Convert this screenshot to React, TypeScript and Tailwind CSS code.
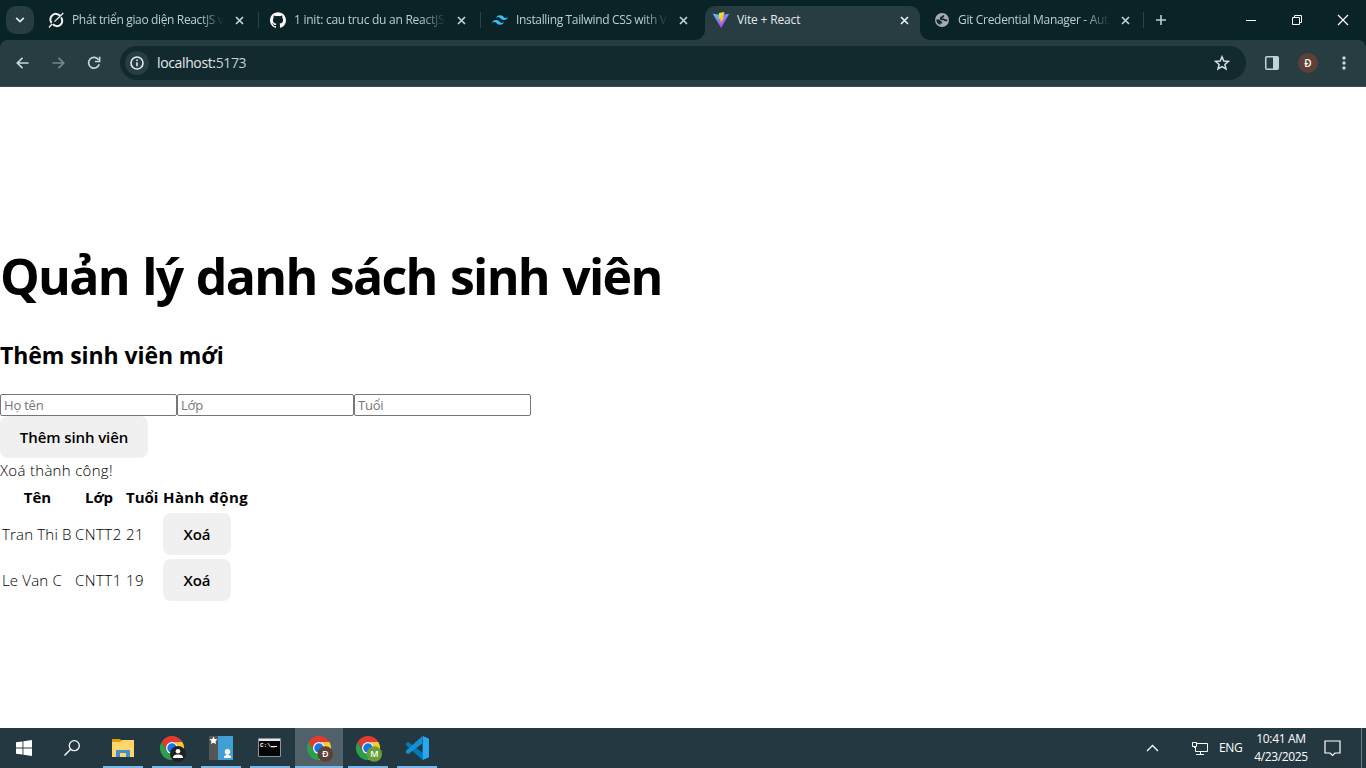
import React from "react";
import { SiGithub, SiTailwindcss } from "react-icons/si";
import { MdMoreVert } from "react-icons/md";

function GrokIcon() {
  return (
    <svg width="16" height="16" viewBox="0 0 16 16" fill="none" stroke="#f1f3f4">
      <path d="M12.2 3.9A5.3 5.3 0 0 0 3.6 11" strokeWidth="2" />
      <path d="M4.8 12.200A5.300 5.300 0 0 0 13 5.400" strokeWidth="2" />
      <path d="M1 15.5 L4 12 M6.5 9.600 L15.300 1" strokeWidth="1.3" />
    </svg>
  );
}

function GlobeIcon() {
  return (
    <svg width="16" height="16" viewBox="0 0 16 16">
      <circle cx="8" cy="8" r="7" fill="#a6abaf" />
      <path d="M9.500 3.300Q9.500 5.200 7.300 5.400Q5.800 7 7.600 7.400H9.800Q11 8.700 13.300 8.100" fill="none" stroke="#0f282c" strokeWidth="1.700" />
      <path d="M2.300 7.600H5.200L8.200 10.200V11.400H6.200V13Q2.300 11.600 2.300 7.600Z" fill="#0f282c" />
    </svg>
  );
}

function ViteIcon() {
  return (
    <svg width="16" height="16" viewBox="0 0 32 32">
      <defs>
        <linearGradient id="va" x1="0" y1="0" x2="0.6" y2="1">
          <stop offset="0" stopColor="#41d1ff" />
          <stop offset="1" stopColor="#bd34fe" />
        </linearGradient>
        <linearGradient id="vb" x1="0.4" y1="0" x2="0.6" y2="1">
          <stop offset="0" stopColor="#ffea83" />
          <stop offset="0.1" stopColor="#ffdd35" />
          <stop offset="1" stopColor="#ffa800" />
        </linearGradient>
      </defs>
      <path d="M31.9 4.6 L17 31.2 Q16.3 32 15.6 31.2 L0.1 4.6 Q-.3 3.3 1 3.5 L16 6.2 L31 3.5 Q32.4 3.3 31.9 4.6Z" fill="url(#va)" />
      <path d="M23.2 0.1 L12.2 2.2 L11.3 14 L15 13.4 L13.7 18.5 L16.2 18 L14.8 24.5 L22.6 10.5 L19.4 11 L23.2 0.1Z" fill="url(#vb)" />
    </svg>
  );
}

function Chrome({ children }: { children?: React.ReactNode }) {
  return (
    <svg width="28" height="28" viewBox="0 0 28 28">
      <g transform="scale(.5)">
        <path d="M24 12H44.8A24 24 0 0 0 3.2 12L13.6 30A12 12 0 0 1 24 12Z" fill="#e33b2e" />
        <path d="M13.6 30L3.2 12A24 24 0 0 0 24 48L34.4 30A12 12 0 0 1 13.6 30Z" fill="#2c9f4b" />
        <path d="M34.4 30L24 48A24 24 0 0 0 44.8 12H24A12 12 0 0 1 34.4 30Z" fill="#fcc934" />
        <circle cx="24" cy="24" r="12" fill="#fff" />
        <circle cx="24" cy="24" r="9.5" fill="#1a73e8" />
      </g>
      {children}
    </svg>
  );
}

function Badge({ color, letter }: { color: string; letter: string }) {
  return (
    <g>
      <circle cx="18.300" cy="18" r="7.800" fill={color} />
      <text x="18.300" y="21.300" textAnchor="middle" fontSize="9" fontWeight="600" fill="#fff" fontFamily="Open Sans, sans-serif">{letter}</text>
    </g>
  );
}

function Tab({ icon, title, width, active, spacing, sep = true }: { icon: React.ReactNode; title: string; width: string; active?: boolean; spacing: string; sep?: boolean }) {
  return (
    <div className={`relative flex h-[34px] shrink-0 items-center pb-[6px] pl-2 ${width} ${active ? "rounded-t-[10px] bg-[#283d41]" : ""}`}>
      {active && (
        <>
          <svg className="absolute bottom-0 -left-[10px]" width="10" height="10"><path d="M10 0V10H0A10 10 0 0 0 10 0Z" fill="#283d41" /></svg>
          <svg className="absolute -right-[10px] bottom-0" width="10" height="10"><path d="M0 0V10H10A10 10 0 0 1 0 0Z" fill="#283d41" /></svg>
        </>
      )}
      <span className="flex size-4 shrink-0 items-center justify-center">{icon}</span>
      <span className={`ml-2 h-4 w-[152px] shrink-0 overflow-hidden text-[12px] leading-4 whitespace-nowrap ${spacing} ${active ? "text-[#e3ecec]" : "[mask-image:linear-gradient(90deg,#000_84%,transparent_100%)] text-[#b9cfd0]"}`}>{title}</span>
      <svg className={`ml-[11px] shrink-0 ${active ? "text-[#e8f0f0]" : "text-[#c3d2d3]"}`} width="9" height="9" stroke="currentColor" strokeWidth="1.700"><path d="M1 1L8 8M8 1L1 8" /></svg>
      {sep && <span className="absolute top-[6px] right-[3px] h-4 w-px bg-[#2e4347]" />}
    </div>
  );
}

function TaskItem({ children, active, open = true, width = "w-[49px]" }: { children: React.ReactNode; active?: boolean; open?: boolean; width?: string }) {
  return (
    <div className={`flex h-10 shrink-0 flex-col items-center ${width}`}>
      <div className={`flex h-[38px] w-12 items-center justify-center ${active ? "bg-[#51616a]" : ""}`}>{children}</div>
      {open && <div className={`h-[2px] bg-[#76b9ed] ${active ? "w-12" : "w-10"}`} />}
    </div>
  );
}

function Button({ children, width }: { children: React.ReactNode; width: string }) {
  return <button className={`h-[42px] rounded-lg bg-[#f0f0f0] text-[15px] font-semibold tracking-[-0.1px] ${width}`}>{children}</button>;
}

const students = [
  { name: "Tran Thi B", group: "CNTT2", age: 21 },
  { name: "Le Van C", group: "CNTT1", age: 19 },
];

function TabStrip() {
  return (
    <div className="flex h-10 items-end bg-[#0a2327] pl-[6px]">
      <button className="mr-[6px] mb-[6px] flex size-7 shrink-0 items-center justify-center rounded-[10px] bg-[#283d41]">
        <svg width="10" height="8" fill="none" stroke="#dce8e8" strokeWidth="1.800"><path d="M1.200 1.800L5 5.600L8.800 1.800" /></svg>
      </button>
      <Tab width="w-[222px]" icon={<GrokIcon />} title="Phát triển giao diện ReactJS với" spacing="tracking-[-0.35px]" />
      <Tab width="w-[222px]" icon={<SiGithub size={16} color="#fff" />} title="1 init: cau truc du an ReactJS" spacing="tracking-[-0.25px]" />
      <Tab width="w-[221px]" icon={<SiTailwindcss size={16} color="#38bdf8" />} title="Installing Tailwind CSS with Vite" spacing="tracking-[-0.35px]" sep={false} />
      <Tab width="w-[215px]" active icon={<ViteIcon />} title="Vite + React" spacing="tracking-[-0.15px]" sep={false} />
      <div className="w-[6px]" />
      <Tab width="w-[221px]" icon={<GlobeIcon />} title="Git Credential Manager - Authentication" spacing="tracking-[-0.32px]" />
      <svg className="mb-[14px] ml-[8px]" width="12" height="12" stroke="#b9cfd0" strokeWidth="1.6"><path d="M6 1V11M1 6H11" /></svg>
      <svg className="mb-[14px] ml-auto" width="120" height="12" fill="none" stroke="#fff">
        <path d="M0 6.5H10" />
        <path d="M46.500 3.500H53.500V10.500H46.500ZM48.500 3V1.500H55.500V8.500H54" />
        <path d="M92 1L102 11M102 1L92 11" strokeWidth="1.2" />
      </svg>
    </div>
  );
}

function Toolbar() {
  return (
    <div className="bg-[#0a2327]">
      <div className="flex h-[47px] items-center rounded-t-[8px] border-b border-[#454a4c] bg-[#283d41] text-[#c3d9da]">
        <svg className="ml-4" width="13" height="12" fill="none" stroke="currentColor" strokeWidth="1.700"><path d="M6.500 .8L1.300 6L6.500 11.200M1.300 6H12.500" /></svg>
        <svg className="ml-[23px] text-[#74898c]" width="13" height="12" fill="none" stroke="currentColor" strokeWidth="1.700"><path d="M6.500 .8L11.700 6L6.500 11.200M11.700 6H.5" /></svg>
        <svg className="ml-[22px]" width="14" height="14" fill="none" stroke="currentColor" strokeWidth="1.700"><path d="M11.600 3.900A5.400 5.400 0 1 0 12.200 8.300" /><path d="M12.600 .8V5.500H7.900" /></svg>
        <div className="ml-[19px] flex h-[34px] w-[1126px] items-center rounded-full bg-[#12292d] pl-[5px]">
          <span className="flex size-6 items-center justify-center rounded-full bg-[#283d41]">
            <svg width="14" height="14" fill="none" stroke="#e3ecec" strokeWidth="1.600"><circle cx="7" cy="7" r="6" /><path d="M7 6.200V10.300M7 3.500V5.100" /></svg>
          </span>
          <span className="ml-2 text-[14px] leading-5 tracking-[-0.37px] text-[#e3ecec]">localhost:<span className="text-[#c4cfd0]">5173</span></span>
          <svg className="mr-4 ml-auto" width="16" height="16" fill="none" stroke="#d5e2e2" strokeWidth="1.500"><path d="M8 1.800L9.800 6L14.400 6.400L10.900 9.400L12 13.900L8 11.500L4 13.900L5.100 9.400L1.600 6.400L6.200 6Z" /></svg>
        </div>
        <svg className="ml-[19px]" width="14" height="14"><rect x=".75" y=".75" width="12.500" height="12.500" rx="1" fill="none" stroke="#bed6d8" strokeWidth="1.500" /><path d="M8 1H13V13H8Z" fill="#bed6d8" /></svg>
        <span className="ml-[19px] flex size-5 items-center justify-center rounded-full bg-[#5d4037] text-[10px] font-semibold text-white">Đ</span>
        <MdMoreVert size={20} className="ml-[16px]" />
      </div>
    </div>
  );
}

function Page() {
  return (
    <main className="h-[641px] bg-white pt-[161px] text-[15px] text-black">
      <h1 className="h-[56px] text-[50px] leading-[56px] font-bold tracking-[-1.700px] [word-spacing:2px] whitespace-nowrap">Quản lý danh sách sinh viên</h1>
      <h2 className="mt-[33px] h-[36px] text-[23px] leading-[36px] font-bold tracking-[-0.080px] whitespace-nowrap">Thêm sinh viên mới</h2>
      <form className="mt-[21px] flex">
        {["Họ tên", "Lớp", "Tuổi"].map((label) => (
          <input key={label} placeholder={label} className="h-[22px] w-[177px] rounded-[2px] border border-[#767676] px-[3px] text-[13px] tracking-[-0.2px] placeholder:text-[#757575]" />
        ))}
      </form>
      <Button width="w-[148px]">Thêm sinh viên</Button>
      <p className="flex h-6 items-center font-light tracking-[0.300px]">Xoá thành công!</p>
      <div className="grid w-[250px] grid-cols-[75px_50px_38px_87px] items-center font-light">
        <span className="flex h-[29px] items-center justify-center pt-[2px] font-bold">Tên</span>
        <span className="pt-[2px] pr-[2px] text-center font-bold">Lớp</span>
        <span className="pt-[2px] pl-px font-bold whitespace-nowrap">Tuổi</span>
        <span className="pt-[2px] font-bold tracking-[0.400px] whitespace-nowrap">Hành động</span>
        {students.map((s) => (
          <React.Fragment key={s.name}>
            <span className="pl-[2px] tracking-[0.180px] whitespace-nowrap">{s.name}</span>
            <span className="tracking-[0.450px]">{s.group}</span>
            <span className="pl-px tracking-[0.500px]">{s.age}</span>
            <div className="flex h-[46px] items-center"><Button width="w-[68px]">Xoá</Button></div>
          </React.Fragment>
        ))}
      </div>
    </main>
  );
}

function Taskbar() {
  return (
    <footer className="flex h-10 bg-[#243842] text-white">
      <TaskItem open={false} width="w-12"><svg className="mt-[2px]" width="16" height="16" fill="#fff"><path d="M0 2.300L6.500 1.400V7.600H0ZM7.400 1.200L16 0V7.600H7.400ZM0 8.400H6.500V14.600L0 13.700ZM7.400 8.400H16V16L7.400 14.800Z" /></svg></TaskItem>
      <TaskItem open={false} width="w-12"><svg className="mt-[2px]" width="16" height="16" fill="none" stroke="#fff" strokeWidth="1.300"><circle cx="10.300" cy="5.700" r="5" /><path d="M6.700 9.300L.5 15.500" /></svg></TaskItem>
      <TaskItem width="w-[54px]">
        <svg className="mt-[2px]" width="22" height="18"><path d="M0 0H8L10 2H22V5H0Z" fill="#e29f0b" /><path d="M0 3H8L10 1H22V18H0Z" fill="#ffd667" /><path d="M4 18V12Q4 11 5 11H17Q18 11 18 12V18H14V14H8V18Z" fill="#3f8fd2" /></svg>
      </TaskItem>
      <TaskItem width="w-[44px]"><div className="pt-[6px] pl-1"><Chrome><circle cx="18" cy="18" r="8" fill="#202124" /><circle cx="18" cy="15.300" r="2.300" fill="#fff" /><path d="M13 21.500Q13 18.500 18 18.500T23 21.500V22H13Z" fill="#fff" /></Chrome></div></TaskItem>
      <TaskItem width="w-[54px]">
        <svg className="mt-[2px]" width="24" height="24"><path d="M0 0H9V24H0Z" fill="#555" /><path d="M9 0H24V24H9Z" fill="#409fd5" /><path d="M4.500 .5L5.700 3L8.500 3.300L6.500 5.200L7 8L4.500 6.700L2 8L2.500 5.200L.5 3.300L3.300 3Z" fill="#fff" /><circle cx="18.500" cy="15.700" r="2.700" fill="#fff" /><path d="M17.500 17H19.500V19L22 20V22H15V20L17.500 19Z" fill="#fff" /></svg>
      </TaskItem>
      <TaskItem width="w-[44px]">
        <svg className="mr-[2px]" width="23" height="19"><path d="M.5 .5H22.500V18.500H.5Z" fill="#050505" stroke="#8b9499" /><path d="M1 1H22V3H1Z" fill="#e5e8ea" /><text x="2" y="9" fontSize="6" fontWeight="bold" fill="#fff" fontFamily="Liberation Mono, monospace">C:\_</text><path d="M13 8.500H19" stroke="#fff" /></svg>
      </TaskItem>
      <TaskItem active width="w-[54px]"><div className="pt-[6px] pl-1"><Chrome><Badge color="#5d4037" letter="Đ" /></Chrome></div></TaskItem>
      <TaskItem width="w-[44px]"><div className="pt-[6px] pl-1"><Chrome><Badge color="#689f38" letter="M" /></Chrome></div></TaskItem>
      <TaskItem width="w-[54px]">
        <svg className="mt-[2px]" width="24" height="24"><path d="M17.500 0L24 2.800V21.200L17.500 24L1 9.200Q.2 8.300 1 7.500L2.500 6.200Q3 5.800 3.700 6.200L18 17V7Z" fill="#0078b9" /><path d="M17.500 24L18 17V7L3.700 17.800Q3 18.200 2.500 17.800L1 16.500Q.2 15.700 1 14.800L17.500 0Z" fill="#168fd5" /><path d="M17.500 0L24 2.800V21.200L17.500 24Q18 24 18 23V1Z" fill="#2aa7ee" /></svg>
      </TaskItem>
      <div className="ml-auto flex items-center text-[12px]">
        <svg width="13" height="8" fill="none" stroke="#fff" strokeWidth="1.300"><path d="M1 7L6.500 1.500L12 7" /></svg>
        <svg className="ml-[33px]" width="16" height="14" fill="none" stroke="#fff"><path d="M5 2.500H15.500V10.500H3.500V6M8.500 11V13.500M4 13.500H12M.5 1.500H4.500V5.500H.5ZM2.500 5V7" /></svg>
        <span className="ml-[11px] w-6 tracking-[-0.400px]">ENG</span>
        <div className="ml-[10px] w-[56px] text-center leading-[18px] tracking-[-0.350px] whitespace-nowrap"><div>10:41 AM</div><div>4/23/2025</div></div>
        <svg className="ml-[15px]" width="17" height="17" fill="none" stroke="#fff" strokeWidth="1.200"><path d="M1 1H16V13H11L8.500 15.500L6 13H1Z" /></svg>
        <div className="ml-[20px] h-10 w-px bg-[#6f7d85]" />
        <div className="w-1" />
      </div>
    </footer>
  );
}

export default function App() {
  return (
    <div className="h-[768px] w-[1366px] overflow-hidden font-['Open_Sans','Noto_Sans',sans-serif]">
      <TabStrip />
      <Toolbar />
      <Page />
      <Taskbar />
    </div>
  );
}
